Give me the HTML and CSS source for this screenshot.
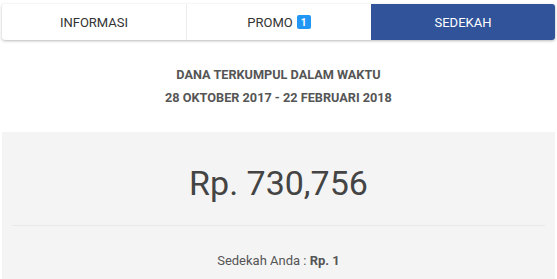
FILE: index.html
```html
<!DOCTYPE html>
<html lang="id">
<head>
<meta charset="utf-8">
<title>Sedekah</title>
<link rel="stylesheet" href="styles.css">
</head>
<body>
<div class="page">
  <nav class="tabs">
    <div class="tab">INFORMASI</div>
    <div class="tab">PROMO <span class="badge">1</span></div>
    <div class="tab active">SEDEKAH</div>
  </nav>
  <section class="info">
    <div class="info-line">DANA TERKUMPUL DALAM WAKTU</div>
    <div class="info-line">28 OKTOBER 2017 - 22 FEBRUARI 2018</div>
  </section>
  <section class="total">
    <div class="amount">Rp. 730,756</div>
    <hr class="divider">
    <div class="mine">Sedekah Anda : <b>Rp. 1</b></div>
  </section>
</div>
</body>
</html>
```
FILE: styles.css
```css
html, body {
  margin: 0;
  padding: 0;
  background: #fff;
}
body {
  font-family: Roboto, "Liberation Sans", sans-serif;
  color: #333;
}
.page {
  padding: 4px 2px 0 2px;
}
.tabs {
  display: flex;
  height: 36px;
  border-radius: 3px;
  overflow: hidden;
  box-shadow: 0 1px 3px rgba(0,0,0,0.28);
  background: #fff;
}
.tab {
  flex: 1;
  display: flex;
  align-items: center;
  justify-content: center;
  gap: 4px;
  font-size: 13px;
  color: #333;
  border-left: 1px solid #ececec;
}
.tab:first-child {
  border-left: none;
}
.tab.active {
  background: #30539a;
  color: #fff;
  border-left: none;
}
.badge {
  display: inline-flex;
  align-items: center;
  justify-content: center;
  width: 14px;
  height: 14px;
  border-radius: 2px;
  background: #2196f3;
  color: #fff;
  font-size: 10px;
  font-weight: 700;
}
.info {
  padding: 23px 0 23px;
  text-align: center;
}
.info-line {
  font-size: 12.7px;
  font-weight: 700;
  line-height: 23px;
  color: #555;
}
.total {
  background: #f4f4f4;
  padding: 31px 0 8px;
  text-align: center;
}
.amount {
  font-size: 34px;
  line-height: 40px;
  color: #444;
}
.divider {
  margin: 22px 10px 0;
  border: none;
  border-top: 1px solid #e8e8e8;
}
.mine {
  padding-top: 25px;
  font-size: 13px;
  line-height: 20px;
  color: #555;
}
.mine b {
  font-weight: 700;
  color: #555;
}
```
